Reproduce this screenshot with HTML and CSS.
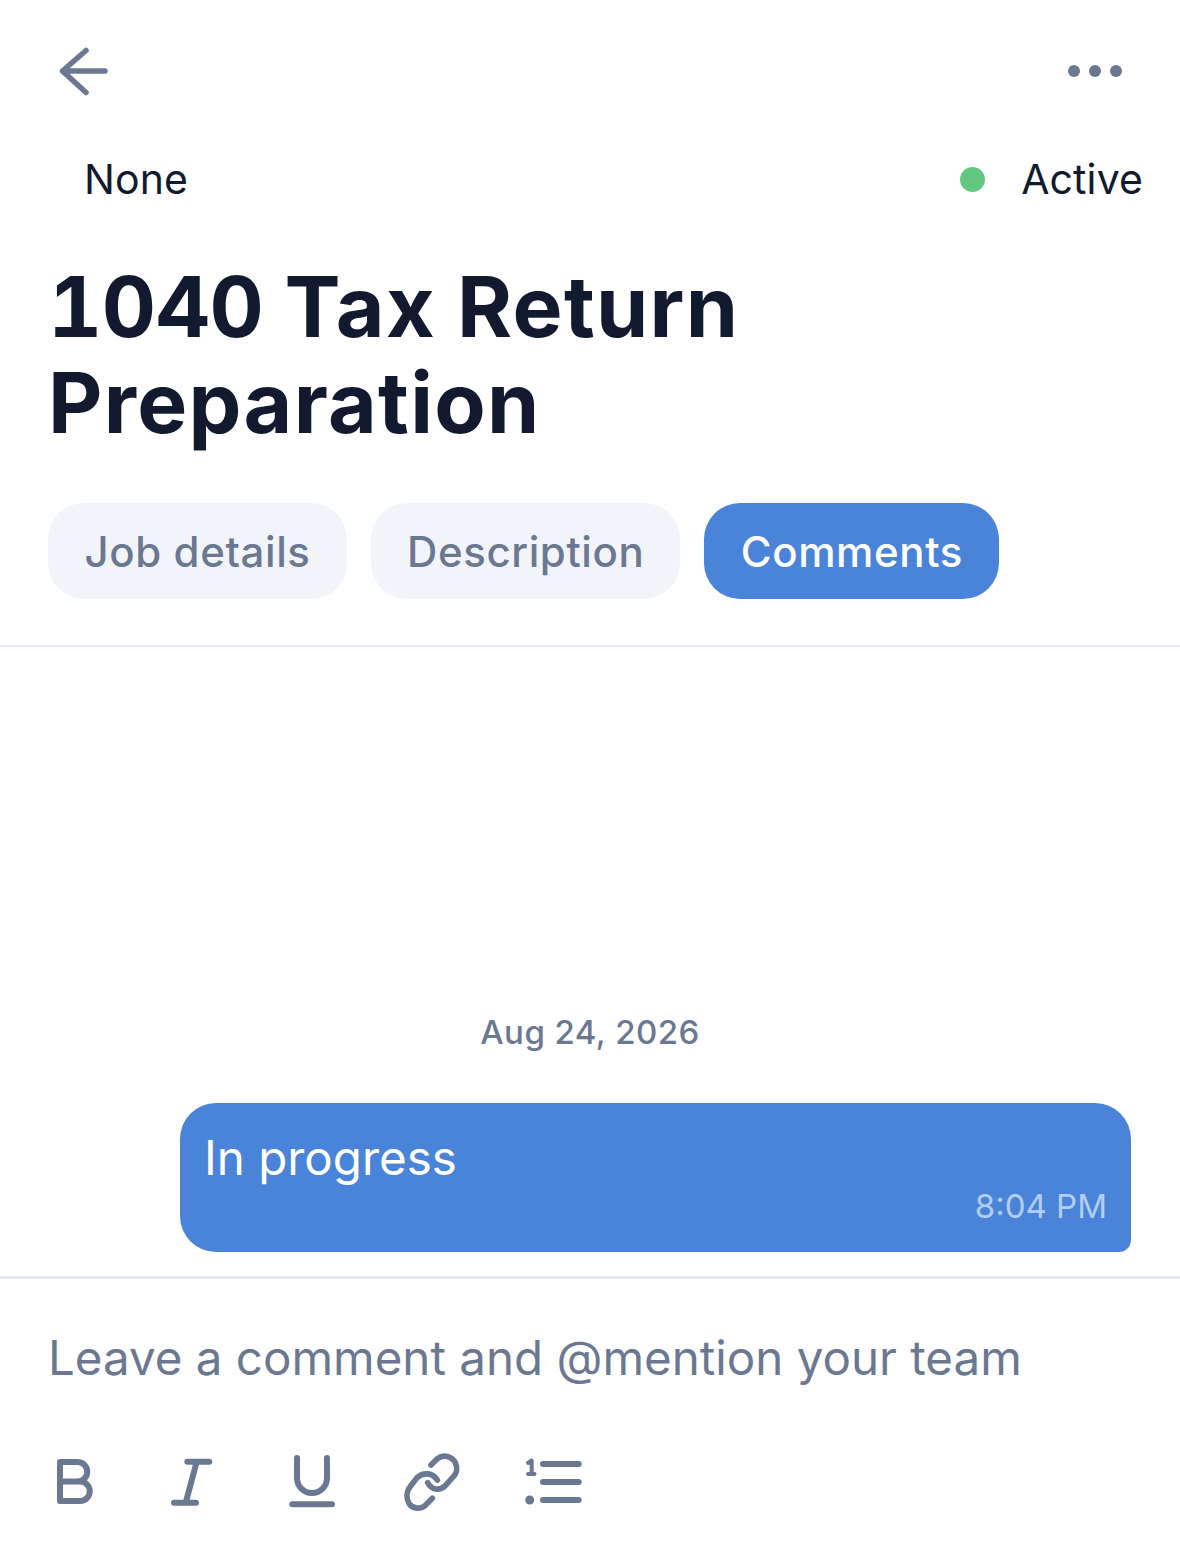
FILE: index.html
```html
<!DOCTYPE html>
<html lang="en">
<head>
  <meta charset="UTF-8" />
  <title>1040 Tax Return Preparation</title>
  <link rel="stylesheet" href="styles.css">
</head>
<body>
  <div class="page">
    <header class="topbar">
      <svg class="icon" viewBox="0 0 72 72" fill="none">
        <path d="M38 15.5 L14.5 36 L38 57.5 M14.5 36 H57" />
      </svg>
      <svg class="icon" viewBox="0 0 72 72">
        <circle class="solid" cx="15" cy="36" r="6" />
        <circle class="solid" cx="36" cy="36" r="6" />
        <circle class="solid" cx="57" cy="36" r="6" />
      </svg>
    </header>

    <div class="meta">
      <span>None</span>
      <span class="status"><i class="dot"></i>Active</span>
    </div>

    <h1 class="title"><span class="digits">1040</span> Tax Return<br>Preparation</h1>

    <nav class="tabs">
      <a class="tab">Job details</a>
      <a class="tab">Description</a>
      <a class="tab active">Comments</a>
    </nav>

    <main class="thread">
      <div class="date">Aug 24, 2026</div>
      <div class="bubble">
        <div class="bubble-text">In progress</div>
        <div class="bubble-time">8:04 PM</div>
      </div>
    </main>

    <footer class="composer">
      <div class="placeholder">Leave a comment and @mention your team</div>
      <div class="toolbar">
        <svg class="icon" viewBox="0 0 72 72" fill="none">
          <path class="bar" d="M21 35.5 H38.5 a9.75 9.75 0 0 0 0 -19.5 H21 V55 H41 a9.75 9.75 0 0 0 0 -19.5" />
        </svg>
        <svg class="icon" viewBox="0 0 72 72" fill="none">
          <path class="bar" d="M28.3 15.7 H50.3 M15 56.7 H37 M37.7 15.7 L26.7 56.7" />
        </svg>
        <svg class="icon" viewBox="0 0 72 72" fill="none">
          <path class="bar" d="M18 12 V32 a15 15 0 0 0 30 0 V12 M13.3 58.3 H53" />
        </svg>
        <svg class="icon" viewBox="57 18 216 216" fill="none">
          <path class="link" d="M153 75 L171 57 C190 42 215 48 226 68 C234 84 230 100 220 110 L196 137 C178 154 155 150 143 128" />
          <path class="link" d="M172 120 C158 98 130 96 112 112 L92 138 C78 155 78 176 88 192 C100 208 122 208 136 196 L157 175" />
        </svg>
        <svg class="icon" viewBox="0 0 72 72" fill="none">
          <path class="bar" d="M24 18 H59.7 M24 36 H59.7 M24 54 H59.7" />
          <path class="num" d="M9 17 L12.7 14.5 V28 M9 28 H15.5" />
          <circle class="solid" cx="10.7" cy="54" r="4.5" />
        </svg>
      </div>
    </footer>
  </div>
</body>
</html>
```

FILE: styles.css
```css
* {
  box-sizing: border-box;
}
body {
  margin: 0;
  font-family: Inter, 'Liberation Sans', sans-serif;
  background-color: #fff;
  color: #111a2e;
}
.page {
  width: 1180px;
  height: 1566px;
  display: flex;
  flex-direction: column;
}
.icon {
  width: 72px;
  height: 72px;
  display: block;
  flex: none;
}
.icon path {
  stroke: #6b7892;
  stroke-width: 5.5;
  stroke-linecap: round;
  stroke-linejoin: round;
}
.icon path.link {
  stroke-width: 17;
}
.icon path.bar {
  stroke-width: 6;
}
.icon path.num {
  stroke-width: 4;
}
.icon .solid {
  fill: #6b7892;
}
.topbar {
  display: flex;
  justify-content: space-between;
  padding: 35px 49px 0 48px;
}
.meta {
  display: flex;
  justify-content: space-between;
  align-items: center;
  padding: 0 37px 0 84px;
  margin-top: 47px;
  height: 50px;
  font-size: 41px;
  letter-spacing: 0.1px;
}
.status {
  display: flex;
  align-items: center;
}
.dot {
  width: 25px;
  height: 25px;
  border-radius: 50%;
  background-color: #62c87f;
  margin-right: 36px;
}
.title {
  margin: 55px 0 0;
  padding-left: 48px;
  font-size: 84px;
  line-height: 96px;
  font-weight: 700;
  letter-spacing: 1.3px;
}
.digits {
  font-variant-numeric: tabular-nums;
  letter-spacing: -0.45px;
}
.tabs {
  display: flex;
  gap: 24px;
  padding: 0 48px 46px;
  margin-top: 52px;
  border-bottom: 2px solid #e5e9ef;
}
.tab {
  height: 96px;
  padding: 0 36px 0 36.5px;
  display: flex;
  align-items: center;
  border-radius: 36px;
  background-color: #f1f5f9;
  color: #6b7892;
  font-size: 42px;
  font-weight: 500;
  letter-spacing: 0.6px;
}
.tab.active {
  background-color: #4a84d9;
  color: #fff;
}
.thread {
  flex: 1;
  display: flex;
  flex-direction: column;
  justify-content: flex-end;
  padding: 0 49px 24px 180px;
  border-bottom: 3px solid #e2e8f0;
}
.date {
  margin: 0 0 51px -180px;
  width: 1180px;
  text-align: center;
  color: #6b7892;
  font-size: 33px;
  font-weight: 500;
  letter-spacing: 0.45px;
}
.bubble {
  height: 149px;
  padding: 26px 24px 0 24px;
  background-color: #4a84d9;
  border-radius: 36px 36px 12px 36px;
  color: #fff;
}
.bubble-text {
  font-size: 47.5px;
  line-height: 58px;
}
.bubble-time {
  text-align: right;
  font-size: 33px;
  line-height: 38px;
  color: #b4cef2;
}
.composer {
  height: 287px;
  padding-top: 50px;
}
.placeholder {
  padding-left: 48px;
  font-size: 47.5px;
  line-height: 58px;
  color: #6b7892;
}
.toolbar {
  display: flex;
  gap: 48px;
  padding-left: 39px;
  margin-top: 59px;
}
```
